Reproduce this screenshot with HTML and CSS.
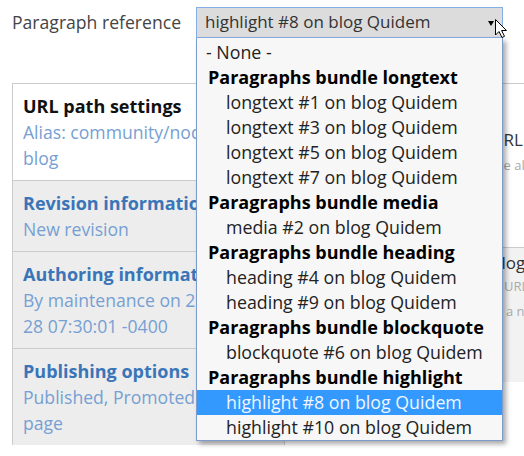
FILE: index.html
```html
<!DOCTYPE html>
<html>
<head>
<meta charset="utf-8">
<link rel="stylesheet" href="styles.css">
</head>
<body>
<div class="field">
  <label class="label">Paragraph reference</label>
  <div class="select-wrap">
    <div class="select">highlight #8 on blog Quidem<span class="arrow"></span></div>
    <ul class="dropdown">
      <li class="none">- None -</li>
      <li class="group">Paragraphs bundle longtext</li>
      <li class="opt">longtext #1 on blog Quidem</li>
      <li class="opt">longtext #3 on blog Quidem</li>
      <li class="opt">longtext #5 on blog Quidem</li>
      <li class="opt">longtext #7 on blog Quidem</li>
      <li class="group">Paragraphs bundle media</li>
      <li class="opt">media #2 on blog Quidem</li>
      <li class="group">Paragraphs bundle heading</li>
      <li class="opt">heading #4 on blog Quidem</li>
      <li class="opt">heading #9 on blog Quidem</li>
      <li class="group">Paragraphs bundle blockquote</li>
      <li class="opt">blockquote #6 on blog Quidem</li>
      <li class="group">Paragraphs bundle highlight</li>
      <li class="opt selected">highlight #8 on blog Quidem</li>
      <li class="opt">highlight #10 on blog Quidem</li>
    </ul>
    <svg class="cursor" width="14" height="21" viewBox="0 0 14 21">
      <path d="M1.5 1.5 L1.5 17 L5 13.5 L8 19.5 L10.5 18.3 L7.6 12.5 L12.5 12.5 Z" fill="#fff" stroke="#000" stroke-width="1" stroke-linejoin="round"/>
    </svg>
  </div>
</div>
<div class="panels">
  <div class="sidebar">
    <div class="section first">
      <div class="sec-title dark">URL path settings</div>
      <div class="sec-sum">Alias: community/node/blog-quidem-<br>blog</div>
    </div>
    <div class="section">
      <div class="sec-title">Revision information</div>
      <div class="sec-sum">New revision</div>
    </div>
    <div class="section">
      <div class="sec-title">Authoring information</div>
      <div class="sec-sum">By maintenance on 2016-11-<br>28 07:30:01 -0400</div>
    </div>
    <div class="section">
      <div class="sec-title">Publishing options</div>
      <div class="sec-sum">Published, Promoted to front<br>page</div>
    </div>
  </div>
  <div class="main">
    <div class="block top">
      <div class="m-label">URL alias</div>
      <div class="m-desc">the alias</div>
    </div>
    <div class="block gray">
      <div class="m-label">blog</div>
      <div class="m-desc shift">URL</div>
      <div class="m-desc shift2">a new</div>
    </div>
  </div>
</div>
</body>
</html>
```

FILE: styles.css
```css
* { box-sizing: border-box; }
html, body { margin: 0; padding: 0; background: #fff; }
body {
  font-family: "Open Sans", "DejaVu Sans", sans-serif;
  font-size: 17px;
  color: #333;
  width: 524px;
  height: 456px;
  overflow: hidden;
}
.field {
  display: flex;
  padding: 7px 0 0 12px;
}
.label {
  width: 184px;
  line-height: 31px;
  font-size: 17.6px;
  color: #444;
}
.select-wrap {
  position: relative;
  z-index: 5;
}
.select {
  position: relative;
  width: 307px;
  height: 31px;
  border: 1px solid #86aee6;
  background: #dcdcdc;
  padding-left: 8px;
  line-height: 28px;
  color: #333;
}
.arrow {
  position: absolute;
  right: 8px;
  top: 13px;
  width: 0;
  height: 0;
  border-left: 3px solid transparent;
  border-right: 3px solid transparent;
  border-top: 5px solid #000;
}
.dropdown {
  position: absolute;
  top: 31px;
  left: 0;
  width: 307px;
  margin: 0;
  padding: 2px 0 0 0;
  list-style: none;
  background: #f7f7f7;
  border: 1px solid #7d9ccc;
  border-top: none;
  box-shadow: 3px 3px 5px rgba(0, 0, 0, 0.35);
}
.dropdown li {
  height: 25px;
  line-height: 25px;
  white-space: nowrap;
  color: #222;
  font-size: 17.8px;
}
.dropdown .none { padding-left: 9px; }
.dropdown .group { padding-left: 11px; font-weight: bold; color: #000; font-size: 18px; }
.dropdown .opt { padding-left: 29px; }
.dropdown .selected { background: #3399ff; color: #f0f6ff; }
.cursor {
  position: absolute;
  left: 298px;
  top: 11px;
}
.panels {
  margin: 45px 0 0 12px;
  display: grid;
  grid-template-columns: 272px 1fr;
  border-top: 1px solid #ccc;
  border-bottom: 1px solid #ccc;
  border-left: 1px solid #ccc;
  height: 362px;
}
.sidebar {
  border-right: 1px solid #ccc;
  background: #ededed;
}
.section {
  padding: 9px 10px 9px 10px;
  border-bottom: 1px solid #ccc;
  line-height: 26px;
  white-space: nowrap;
  overflow: hidden;
  background: #ededed;
}
.section:last-child { border-bottom: none; }
.section.first { background: #fff; }
.sec-title {
  font-weight: bold;
  font-size: 18px;
  color: #3a75b8;
}
.sec-title.dark { color: #111; }
.sec-sum { color: #76a0d3; font-size: 17.6px; }
.main {
  background: #fff;
  white-space: nowrap;
  overflow: hidden;
}
.block { padding-left: 206px; }
.block.top {
  height: 164px;
  padding-top: 43px;
  border-bottom: 1px solid #ccc;
}
.block.gray {
  background: #f2f2f2;
  height: 134px;
  padding-top: 2px;
}
.m-label { line-height: 26px; color: #333; }
.m-desc {
  font-size: 13px;
  line-height: 25px;
  color: #aaa;
}
.m-desc.shift { padding-left: 13px; line-height: 20px; }
.m-desc.shift2 { padding-left: 15px; line-height: 30px; }
```
